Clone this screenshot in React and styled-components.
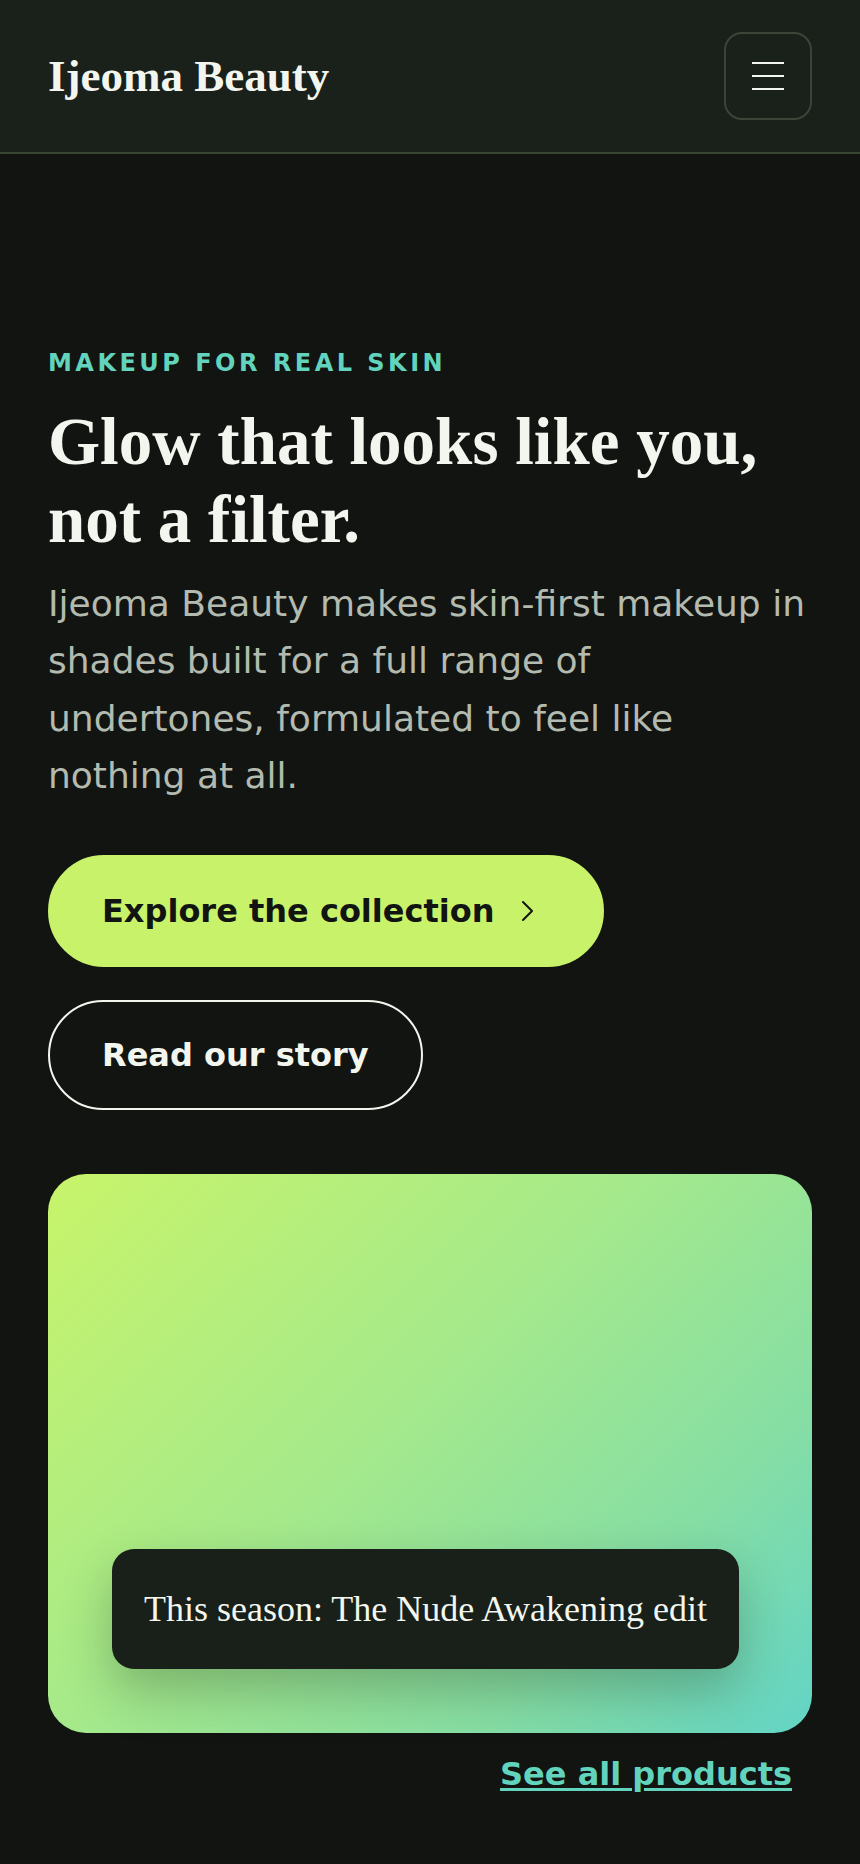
import React from 'react';
import styled, { createGlobalStyle } from 'styled-components';

const GlobalStyle = createGlobalStyle`
  * {
    box-sizing: border-box;
  }
  body {
    margin: 0;
    background: #111410;
    color: #f3f6ee;
    font-family: "DejaVu Sans", Verdana, sans-serif;
  }
`;

const Page = styled.div`
  min-height: 1864px;
  background: #111410;
`;

const Header = styled.header`
  display: flex;
  align-items: center;
  justify-content: space-between;
  padding: 32px 48px;
  background: #1a201a;
  border-bottom: 2px solid #3a4634;
`;

const Logo = styled.a`
  font-family: "Liberation Serif", "Times New Roman", serif;
  font-weight: 700;
  font-size: 45px;
  color: #f3f6ee;
  text-decoration: none;
`;

const MenuButton = styled.button`
  width: 88px;
  height: 88px;
  display: flex;
  flex-direction: column;
  align-items: center;
  justify-content: center;
  gap: 11px;
  background: transparent;
  border: 2px solid #3a4537;
  border-radius: 18px;
  padding: 0;
`;

const MenuLine = styled.span`
  display: block;
  width: 32px;
  height: 2px;
  background: #f3f6ee;
`;

const Hero = styled.section`
  padding: 195px 48px 70px;
`;

const Eyebrow = styled.p`
  margin: 0;
  font-size: 24px;
  font-weight: 700;
  letter-spacing: 0.145em;
  text-transform: uppercase;
  color: #62d3bd;
`;

const Title = styled.h1`
  margin: 25px 0 0;
  font-family: "Liberation Serif", "Times New Roman", serif;
  font-weight: 700;
  font-size: 67px;
  line-height: 78px;
  color: #f3f6ee;
`;

const Lead = styled.p`
  margin: 17px 0 0;
  font-size: 36px;
  line-height: 57.4px;
  color: #b3baaf;
`;

const Actions = styled.div`
  display: flex;
  flex-wrap: wrap;
  gap: 33px;
  margin-top: 50px;
`;

const Button = styled.a`
  display: inline-flex;
  align-items: center;
  gap: 15px;
  padding: 34px 52px;
  border-radius: 999px;
  font-size: 32px;
  font-weight: 700;
  text-decoration: none;
  border: 2px solid ${p => (p.$primary ? '#c8f26a' : '#f3f6ee')};
  background: ${p => (p.$primary ? '#c8f26a' : 'transparent')};
  color: ${p => (p.$primary ? '#111410' : '#f3f6ee')};
`;

const Feature = styled.div`
  margin-top: 64px;
  min-height: 559px;
  display: flex;
  flex-direction: column;
  justify-content: flex-end;
  align-items: flex-start;
  padding: 64px;
  border-radius: 38px;
  background: linear-gradient(135deg, #c8f46a 0%, #a4e98c 45%, #86dea4 75%, #62d4c6 100%);
`;

const Badge = styled.div`
  padding: 32px;
  border-radius: 22px;
  background: #182019;
  font-family: "Liberation Serif", "Times New Roman", serif;
  font-size: 36px;
  line-height: 56px;
  color: #f3f6ee;
  box-shadow: 0 22px 50px rgba(20, 40, 25, 0.28);
`;

const MoreRow = styled.div`
  display: flex;
  justify-content: flex-end;
  margin-top: 22px;
  padding-right: 20px;
`;

const MoreLink = styled.a`
  font-size: 32px;
  font-weight: 700;
  color: #62d3bd;
  text-decoration: underline;
  text-underline-offset: 3px;
`;

const Chevron = () => (
  <svg width="40" height="40" viewBox="0 0 40 40" fill="none">
    <polyline points="13,11 22,20 13,29" stroke="#111410" strokeWidth="2" strokeLinecap="round" strokeLinejoin="round" />
  </svg>
);

export default function App() {
  return (
    <Page>
      <GlobalStyle />
      <Header>
        <Logo href="#">Ijeoma Beauty</Logo>
        <MenuButton aria-label="Open menu">
          <MenuLine />
          <MenuLine />
          <MenuLine />
        </MenuButton>
      </Header>
      <Hero>
        <Eyebrow>Makeup for real skin</Eyebrow>
        <Title>Glow that looks like you, not a filter.</Title>
        <Lead>
          Ijeoma Beauty makes skin-first makeup in shades built for a full range of undertones,
          formulated to feel like nothing at all.
        </Lead>
        <Actions>
          <Button href="#" $primary>
            Explore the collection
            <Chevron />
          </Button>
          <Button href="#">Read our story</Button>
        </Actions>
        <Feature>
          <Badge>This season: The Nude Awakening edit</Badge>
        </Feature>
        <MoreRow>
          <MoreLink href="#">See all products</MoreLink>
        </MoreRow>
      </Hero>
    </Page>
  );
}
